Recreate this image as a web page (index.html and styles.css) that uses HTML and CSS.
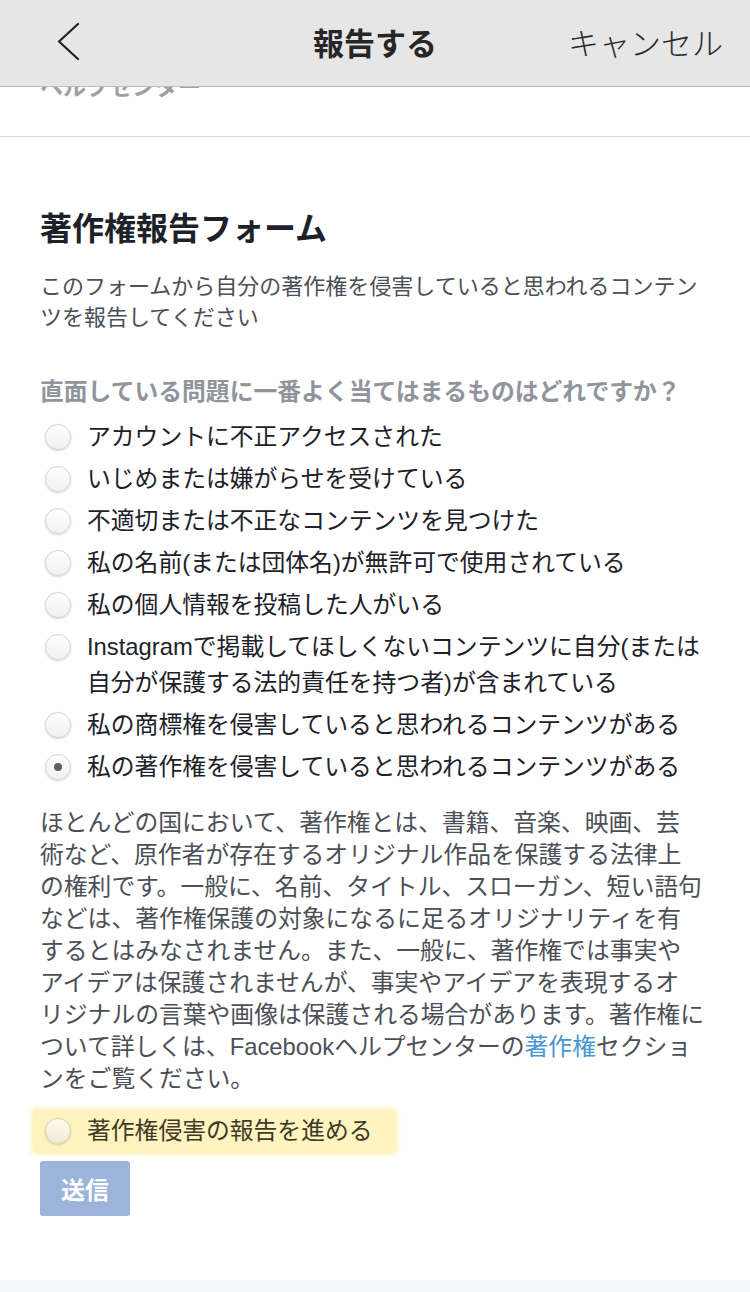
FILE: index.html
```html
<!DOCTYPE html>
<html lang="ja">
<head>
<meta charset="utf-8">
<title>報告する</title>
<link rel="stylesheet" href="styles.css">
</head>
<body>
<div class="page">
  <header class="topbar">
    <span class="back">
      <svg width="24" height="38" viewBox="0 0 24 38"><polyline points="21,2 2,19.5 21,37" fill="none" stroke="#222" stroke-width="2.2" stroke-linecap="round" stroke-linejoin="round"/></svg>
    </span>
    <span class="title">報告する</span>
    <span class="cancel">キャンセル</span>
  </header>

  <section class="prev">
    <div class="prev-text">ヘルプセンター</div>
  </section>

  <section class="form">
    <h1 class="heading">著作権報告フォーム</h1>
    <p class="desc">このフォームから自分の著作権を侵害していると思われるコンテン<br>ツを報告してください</p>
    <p class="question">直面している問題に一番よく当てはまるものはどれですか？</p>
    <ul class="radios">
      <li class="row"><span class="radio"></span><span class="label">アカウントに不正アクセスされた</span></li>
      <li class="row"><span class="radio"></span><span class="label">いじめまたは嫌がらせを受けている</span></li>
      <li class="row"><span class="radio"></span><span class="label">不適切または不正なコンテンツを見つけた</span></li>
      <li class="row"><span class="radio"></span><span class="label">私の名前(または団体名)が無許可で使用されている</span></li>
      <li class="row"><span class="radio"></span><span class="label">私の個人情報を投稿した人がいる</span></li>
      <li class="row"><span class="radio"></span><span class="label">Instagramで掲載してほしくないコンテンツに自分(または<br>自分が保護する法的責任を持つ者)が含まれている</span></li>
      <li class="row"><span class="radio"></span><span class="label">私の商標権を侵害していると思われるコンテンツがある</span></li>
      <li class="row"><span class="radio checked"></span><span class="label">私の著作権を侵害していると思われるコンテンツがある</span></li>
    </ul>
    <p class="body">ほとんどの国において、著作権とは、書籍、音楽、映画、芸<br>術など、原作者が存在するオリジナル作品を保護する法律上<br>の権利です。一般に、名前、タイトル、スローガン、短い語句<br>などは、著作権保護の対象になるに足るオリジナリティを有<br>するとはみなされません。また、一般に、著作権では事実や<br>アイデアは保護されませんが、事実やアイデアを表現するオ<br>リジナルの言葉や画像は保護される場合があります。著作権に<br>ついて詳しくは、Facebookヘルプセンターの<a class="link" href="#">著作権</a>セクショ<br>ンをご覧ください。</p>
    <div class="row highlight"><span class="radio"></span><span class="label">著作権侵害の報告を進める</span></div>
    <div class="actions"><button class="submit" type="button">送信</button></div>
  </section>
  <div class="footer-band"></div>
</div>
</body>
</html>
```

FILE: styles.css
```css
* { box-sizing: border-box; }
html, body { margin: 0; padding: 0; background: #fff; }
body {
  font-family: "Liberation Sans", "Noto Sans CJK JP", sans-serif;
  color: #1d2129;
}
.page { position: relative; width: 750px; min-height: 1292px; overflow: hidden; }

.topbar {
  position: absolute;
  top: 0; left: 0; right: 0;
  height: 87px;
  background: #e6e6e6;
  border-bottom: 1px solid #bcbcbc;
  display: grid;
  grid-template-columns: 1fr auto 1fr;
  align-items: center;
  z-index: 2;
}
.back { justify-self: start; padding-left: 57px; display: flex; margin-top: -4px; }
.title { font-family: "Noto Sans CJK JP", sans-serif; font-weight: 700; font-size: 31px; color: #262626; margin-top: -3px; }
.cancel { justify-self: end; padding-right: 27px; font-family: "Noto Sans CJK JP", sans-serif; font-weight: 300; font-size: 31px; color: #2b2b2b; margin-top: -3px; }

.prev {
  height: 137px;
  border-bottom: 1px solid #dadada;
  padding: 69px 40px 0;
}
.prev-text { font-family: "Noto Sans CJK JP", sans-serif; font-weight: 700; font-size: 23px; line-height: 32px; color: #a0a0a0; }

.form { padding: 69px 0 64px 40px; }
.heading { margin: 0; font-family: "Noto Sans CJK JP", sans-serif; font-weight: 700; font-size: 32px; line-height: 40px; color: #1d2129; }
.desc { margin: 25px 0 0; font-size: 22px; line-height: 31px; color: #4b4f56; white-space: nowrap; }
.question { margin: 40px 0 0; font-family: "Noto Sans CJK JP", sans-serif; font-weight: 700; font-size: 23.8px; line-height: 34px; color: #90949c; white-space: nowrap; }

.radios { list-style: none; margin: 9px 0 0; padding: 0; }
.row { display: flex; align-items: flex-start; gap: 16px; padding: 3px 0 3px 5px; }
.label { font-size: 23.8px; line-height: 36px; color: #1d2129; white-space: nowrap; }
.radio {
  flex: none;
  position: relative;
  width: 26px; height: 26px;
  margin-top: 5px;
  border-radius: 50%;
  border: 1px solid #d4d4d4;
  background: linear-gradient(#ffffff, #f1f1f1);
  box-shadow: 0 1px 2px rgba(0,0,0,0.18);
}
.radio.checked::after {
  content: "";
  position: absolute;
  left: 50%; top: 50%;
  width: 8px; height: 8px;
  margin: -4px 0 0 -4px;
  border-radius: 50%;
  background: #58616b;
}

.body { margin: 19px 0 0; font-size: 23.8px; line-height: 32px; color: #4b4f56; white-space: nowrap; }
.link { color: #4596d2; text-decoration: none; }

.highlight {
  display: inline-flex;
  margin: 15px 0 0 -7px;
  padding: 3px 23px 4px 12px;
  background: rgba(255, 233, 140, 0.55);
  box-shadow: 0 0 5px 2px rgba(255, 233, 140, 0.55);
  border-radius: 3px;
}
.highlight .label { color: #3e3a26; }
.highlight .radio { background: linear-gradient(#fffaf0, #f1ead2); border-color: #d9d2b4; }

.actions { margin-top: 8px; }
.submit {
  height: 55px;
  padding: 0 21px;
  border: 0;
  border-radius: 3px;
  background: #9cb4d9;
  color: #fff;
  font-family: "Noto Sans CJK JP", sans-serif;
  font-weight: 700;
  font-size: 24px;
}
.footer-band { height: 20px; background: #f5f6f7; }
```
